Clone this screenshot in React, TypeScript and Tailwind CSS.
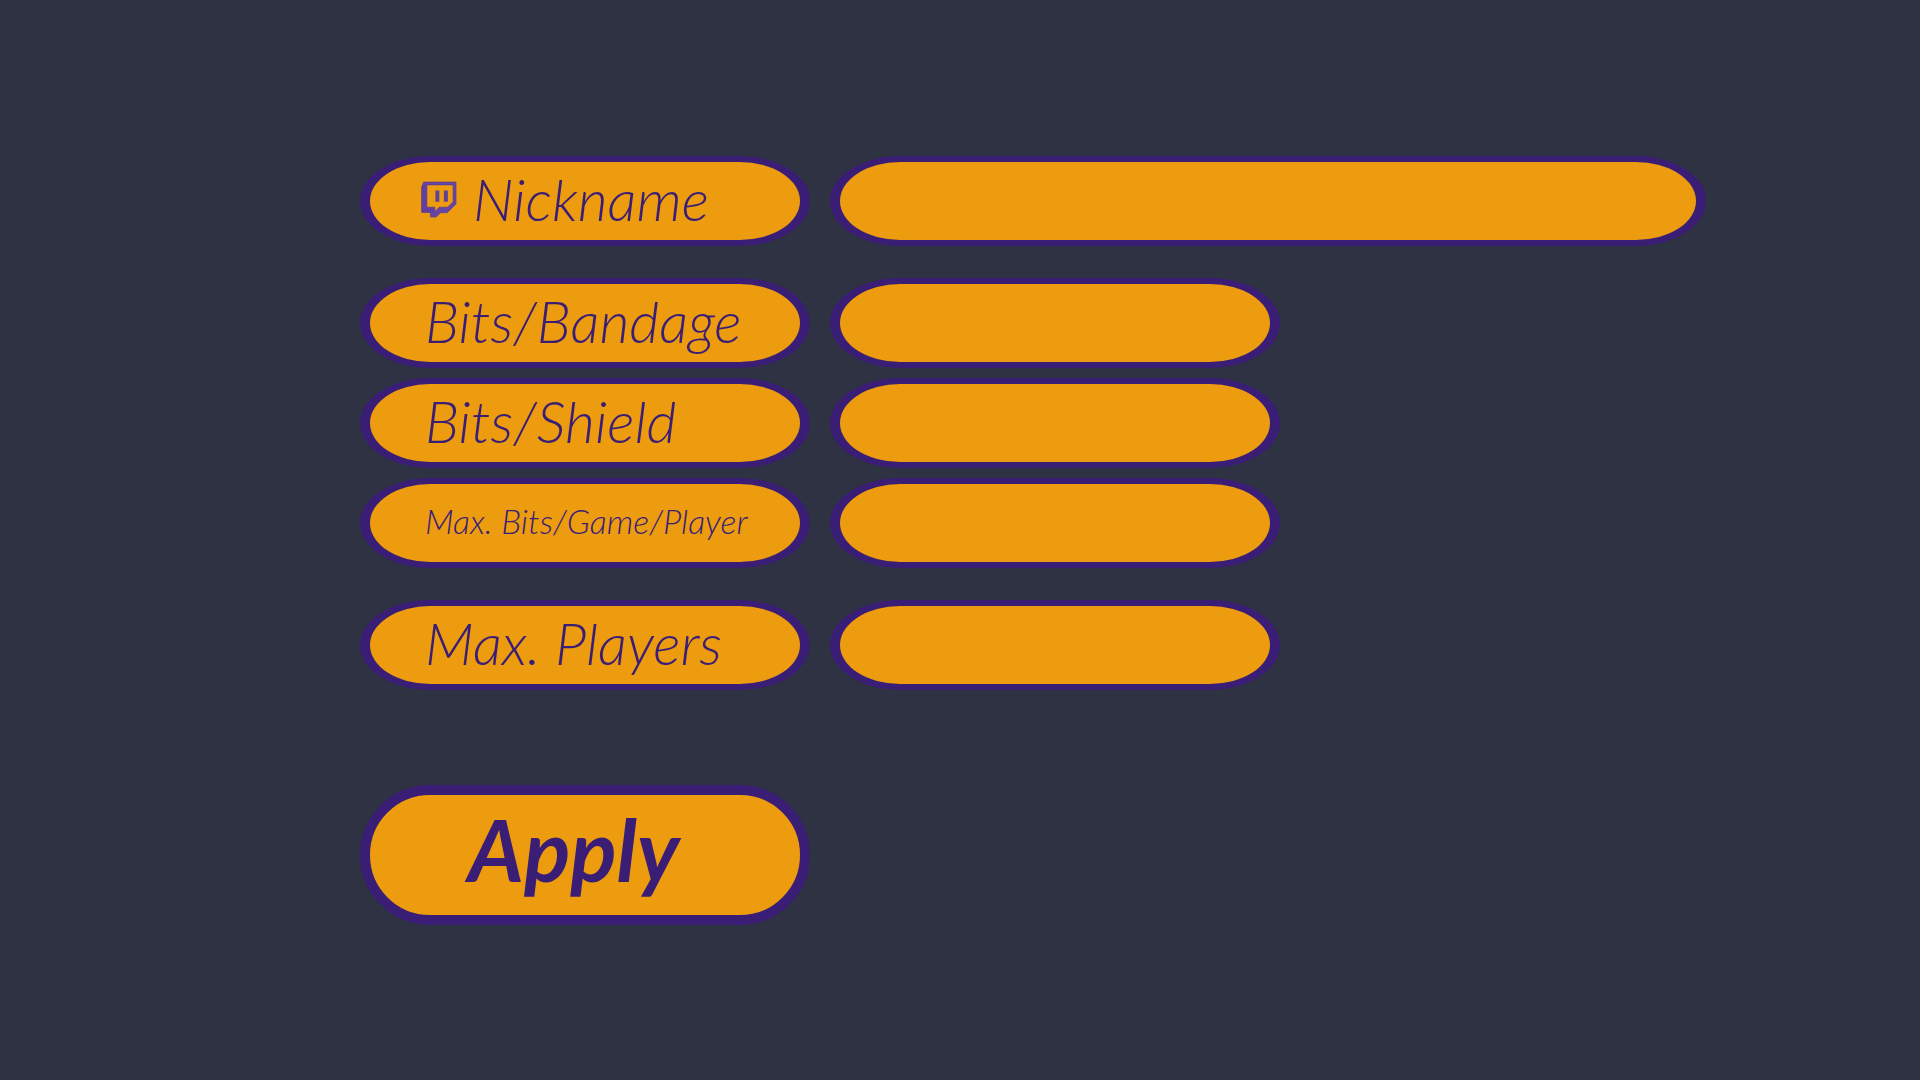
import type { ReactNode } from "react";

function TwitchIcon() {
  return (
    <svg viewBox="32 32 110 111" className="h-[37px] w-9 shrink-0" aria-hidden="true">
      <path
        fillRule="evenodd"
        fill="#6844a6"
        stroke="#5a3d86"
        strokeWidth="2"
        d="M40 34H139V101L112 128H92L78 141H61V127H34V50ZM50 43V111H74V124L88 111H113L130 95V43Z"
      />
      <path fill="#5f4296" d="M76 60H88V94H76ZM102 60H114V94H102Z" />
      <path fill="#59389b" d="M34 50L40 34L47 43V112H74V127H34Z" opacity="0.5" />
    </svg>
  );
}

type FieldProps = {
  id: string;
  children: ReactNode;
  wide?: boolean;
  small?: boolean;
  icon?: ReactNode;
};

function Field({ id, children, wide, small, icon }: FieldProps) {
  return (
    <div className="grid grid-cols-[450px_1fr] gap-5">
      <label
        htmlFor={id}
        className={`flex h-[90px] items-center gap-4 whitespace-nowrap rounded-[70px/45px] border-x-10 border-y-6 border-[#3a1e76] bg-[#ed9c10] pb-1 font-light italic leading-none text-[#3a1e76] ${
          icon ? "pl-[51px]" : "pl-[55px]"
        } ${small ? "text-[34px]" : "text-[58px]"}`}
      >
        {icon}
        <span>{children}</span>
      </label>
      <input
        id={id}
        type="text"
        className={`h-[90px] w-full rounded-[70px/45px] border-x-10 border-y-6 border-[#3a1e76] bg-[#ed9c10] px-12 text-[52px] font-light italic text-[#3a1e76] outline-none ${
          wide ? "" : "max-w-[450px]"
        }`}
      />
    </div>
  );
}

export default function App() {
  return (
    <main className="min-h-screen bg-[#2f3242] pl-[18.75%] pr-[11.125%] pt-39 pb-20 font-['Lato',sans-serif]">
      <form className="flex flex-col gap-8" onSubmit={(e) => e.preventDefault()}>
        <Field id="nickname" wide icon={<TwitchIcon />}>
          Nickname
        </Field>
        <div className="flex flex-col gap-2.5">
          <Field id="bandage">Bits/Bandage</Field>
          <Field id="shield">Bits/Shield</Field>
          <Field id="max-bits" small>
            Max. Bits/Game/Player
          </Field>
        </div>
        <Field id="max-players">Max. Players</Field>
        <button
          type="submit"
          className="mt-[63px] flex h-[140px] w-[450px] items-center rounded-[70px] border-10 border-[#3a1e76] bg-[#ed9c10] pb-3 pl-[98px] text-[86px] font-bold italic leading-none text-[#3a1e76]"
        >
          Apply
        </button>
      </form>
    </main>
  );
}
